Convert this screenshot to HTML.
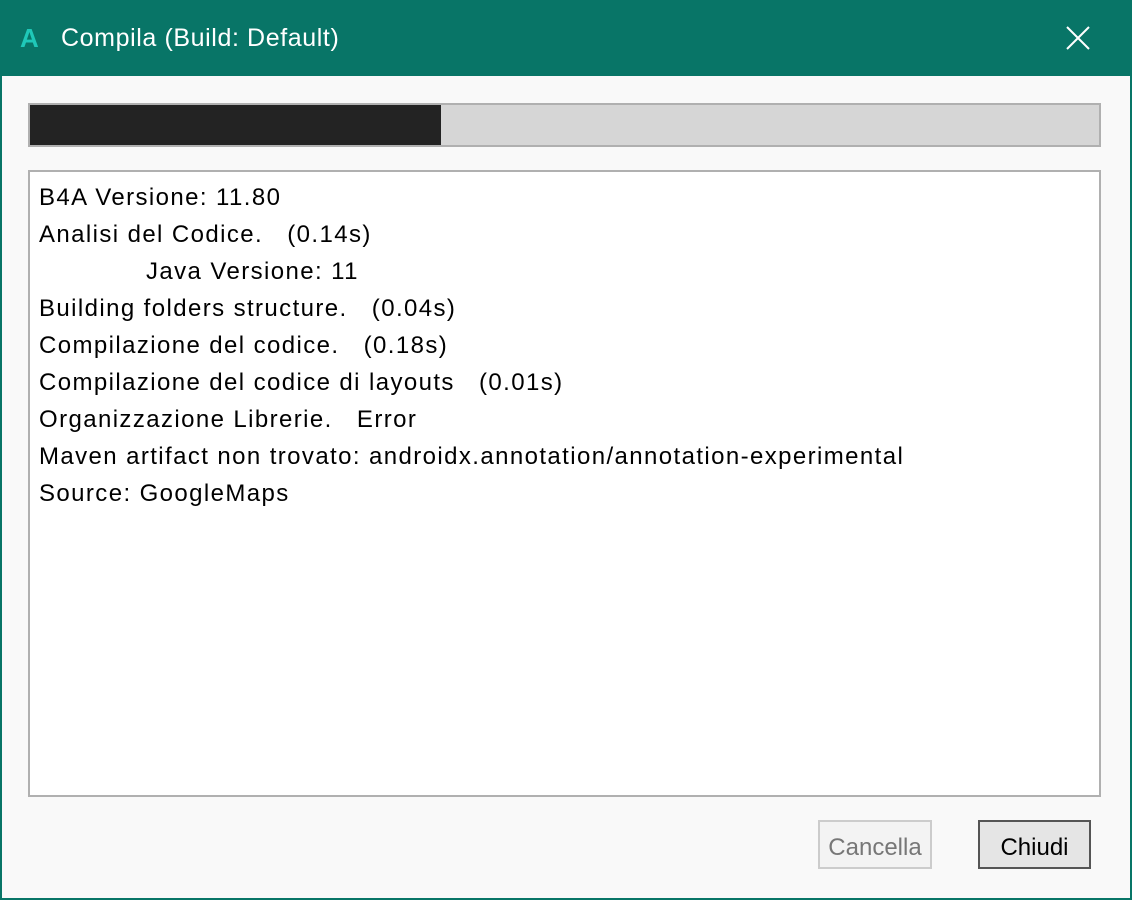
<!DOCTYPE html>
<html><head><style>
body{margin:0;width:1132px;height:900px;overflow:hidden;font-family:"Liberation Sans",sans-serif;}
.win{position:absolute;left:0;top:0;width:1128px;height:898px;border:2px solid #087567;border-top:none;background:#f9f9f9;}
.title{position:absolute;left:0;top:0;width:1132px;height:76px;background:#087567;color:#fff;}
.title .t{position:absolute;left:61px;top:24px;font-size:25px;letter-spacing:0.6px;}
.title .a{position:absolute;left:20px;top:23px;font-size:26px;font-weight:bold;color:#1fc8b8;}
.pb{position:absolute;left:28px;top:103px;width:1069px;height:40px;border:2px solid #b0b0b0;background:#d6d6d6;}
.pb div{position:absolute;left:0;top:0;width:411px;height:40px;background:#232323;}
.tb{position:absolute;left:28px;top:170px;width:1069px;height:623px;border:2px solid #b0b0b0;background:#fff;}
.tb div{position:absolute;left:9px;font-size:24px;letter-spacing:1.4px;color:#000;white-space:pre;}
.btn{position:absolute;top:820px;height:45px;font-size:24px;text-align:center;line-height:51px;}
</style></head><body>
<div class="win"></div>
<div class="title"><span class="a">A</span><span class="t">Compila (Build: Default)</span>
<svg style="position:absolute;left:1066px;top:26px" width="24" height="24"><path d="M1 1L23 23M23 1L1 23" stroke="#fff" stroke-width="2"/></svg></div>
<div class="pb"><div></div></div>
<div class="tb">
<div style="top:12px">B4A Versione: 11.80</div>
<div style="top:49px">Analisi del Codice.   (0.14s)</div>
<div style="top:86px;left:116px">Java Versione: 11</div>
<div style="top:123px">Building folders structure.   (0.04s)</div>
<div style="top:160px">Compilazione del codice.   (0.18s)</div>
<div style="top:197px">Compilazione del codice di layouts   (0.01s)</div>
<div style="top:234px">Organizzazione Librerie.   Error</div>
<div style="top:271px">Maven artifact non trovato: androidx.annotation/annotation-experimental</div>
<div style="top:308px">Source: GoogleMaps</div>
</div>
<div class="btn" style="left:818px;width:110px;border:2px solid #ccc;background:#f3f3f3;color:#777">Cancella</div>
<div class="btn" style="left:978px;width:109px;border:2px solid #555;background:#e5e5e5;color:#000">Chiudi</div>
</body></html>
